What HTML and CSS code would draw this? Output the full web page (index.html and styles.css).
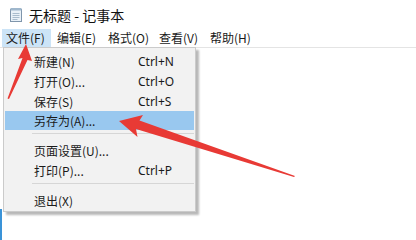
FILE: index.html
```html
<!DOCTYPE html>
<html lang="zh-CN">
<head>
  <meta charset="UTF-8" />
  <title>无标题 - 记事本</title>
  <link rel="stylesheet" href="styles.css">
</head>
<body>

  <div class="titlebar">
    <svg class="app-icon" width="14" height="15" viewBox="0 0 14 15">
      <rect x="1.5" y="2.5" width="11" height="12" fill="#e9f1f8" stroke="#7f95ab" />
      <rect x="1.5" y="1" width="11" height="2.5" fill="#9fb7cc" />
      <line x1="3.5" y1="6.5" x2="10.5" y2="6.5" stroke="#a9bccd" />
      <line x1="3.5" y1="8.5" x2="10.5" y2="8.5" stroke="#a9bccd" />
      <line x1="3.5" y1="10.5" x2="10.5" y2="10.5" stroke="#a9bccd" />
      <line x1="3.5" y1="12.5" x2="8.5" y2="12.5" stroke="#a9bccd" />
    </svg>
    <span class="title">无标题 - 记事本</span>
  </div>

  <div class="menubar">
    <span class="menu-item active">文件(F)</span>
    <span class="menu-item">编辑(E)</span>
    <span class="menu-item">格式(O)</span>
    <span class="menu-item">查看(V)</span>
    <span class="menu-item">帮助(H)</span>
  </div>

  <div class="frame-edge"></div>

  <!-- 文件 菜单 -->
  <div class="dropdown">
    <div class="row"><span class="label">新建(N)</span><span class="key">Ctrl+N</span></div>
    <div class="row"><span class="label">打开(O)...</span><span class="key">Ctrl+O</span></div>
    <div class="row"><span class="label">保存(S)</span><span class="key">Ctrl+S</span></div>
    <div class="row hover"><span class="label">另存为(A)...</span><span class="key"></span></div>
    <div class="sep"></div>
    <div class="row"><span class="label">页面设置(U)...</span><span class="key"></span></div>
    <div class="row"><span class="label">打印(P)...</span><span class="key">Ctrl+P</span></div>
    <div class="sep"></div>
    <div class="row"><span class="label">退出(X)</span><span class="key"></span></div>
  </div>

  <svg class="arrows" width="416" height="240" viewBox="0 0 416 240">
    <!-- 箭头1 指向 文件 -->
    <polygon points="26,44 32,61 27.5,60 9,99 7.5,98.5 22.5,58 18,59" fill="#e83a35" />
    <!-- 箭头2 指向 另存为 -->
    <polygon points="119,121 143,115 139.5,120.5 295,176 294,177 136,129 137.5,137" fill="#e83a35" />
  </svg>

</body>
</html>
```

FILE: styles.css
```css
body {
  margin: 0;
  width: 416px;
  height: 240px;
  background: #fff;
  font-family: "Noto Sans CJK SC", "Noto Sans", sans-serif;
  color: #1a1a1a;
  overflow: hidden;
  position: relative;
}
.titlebar {
  height: 29px;
  display: flex;
  align-items: center;
  padding-left: 9px;
}
.app-icon {
  margin-right: 6px;
}
.title {
  font-size: 14px;
  color: #111;
}
.menubar {
  height: 18px;
  display: flex;
  align-items: center;
  border-bottom: 1px solid #e4e4e4;
  padding-left: 2px;
}
.menu-item {
  font-size: 12px;
  line-height: 18px;
  width: 51px;
  padding-left: 4px;
  box-sizing: border-box;
  white-space: nowrap;
}
.menu-item.active {
  background: #cce4f7;
  width: 49px;
  margin-right: 2px;
}
.frame-edge {
  position: absolute;
  left: 0;
  top: 209px;
  width: 2px;
  height: 31px;
  background: #3a93d8;
}
.dropdown {
  position: absolute;
  left: 3px;
  top: 47px;
  width: 189px;
  padding: 3px 1px 1px;
  background: #f2f2f2;
  border: 1px solid #cbcbcb;
  box-shadow: 3px 3px 2px rgba(0, 0, 0, 0.28);
}
.row {
  display: flex;
  height: 20px;
  align-items: center;
  font-size: 12px;
}
.row.hover {
  background: #99c8ef;
  height: 19px;
  margin-bottom: 1px;
}
.label {
  width: 104px;
  padding-left: 29px;
  white-space: nowrap;
}
.key {
  font-family: "Noto Sans", sans-serif;
  font-size: 12px;
}
.sep {
  height: 1px;
  background: #d6d6d6;
  margin: 3px 0 6px 27px;
}
.arrows {
  position: absolute;
  left: 0;
  top: 0;
}
```
